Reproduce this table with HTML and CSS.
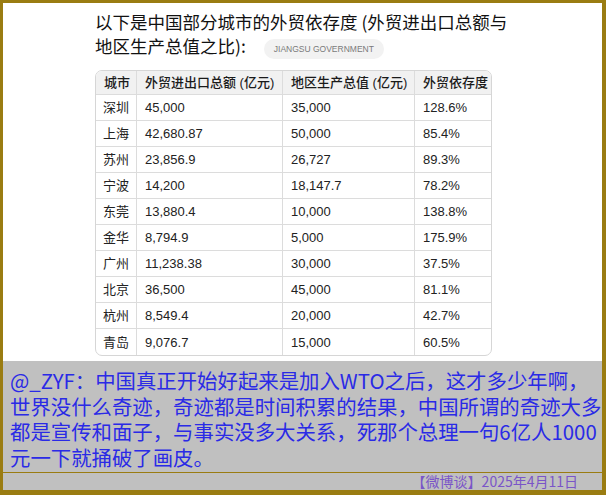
FILE: index.html
```html
<!DOCTYPE html>
<html lang="zh-CN">
<head>
<meta charset="utf-8">
<title>外贸依存度</title>
<link rel="stylesheet" href="styles.css">
</head>
<body>
<div class="frame">
  <div class="shot">
    <h1 class="title">以下是中国部分城市的外贸依存度 (外贸进出口总额与<br>地区生产总值之比):<span class="badge">JIANGSU GOVERNMENT</span></h1>
    <div class="table-wrap">
      <table class="data">
        <thead>
          <tr><th class="c1">城市</th><th class="c2">外贸进出口总额 (亿元)</th><th class="c3">地区生产总值 (亿元)</th><th class="c4">外贸依存度</th></tr>
        </thead>
        <tbody>
          <tr><td>深圳</td><td>45,000</td><td>35,000</td><td>128.6%</td></tr>
          <tr><td>上海</td><td>42,680.87</td><td>50,000</td><td>85.4%</td></tr>
          <tr><td>苏州</td><td>23,856.9</td><td>26,727</td><td>89.3%</td></tr>
          <tr><td>宁波</td><td>14,200</td><td>18,147.7</td><td>78.2%</td></tr>
          <tr><td>东莞</td><td>13,880.4</td><td>10,000</td><td>138.8%</td></tr>
          <tr><td>金华</td><td>8,794.9</td><td>5,000</td><td>175.9%</td></tr>
          <tr><td>广州</td><td>11,238.38</td><td>30,000</td><td>37.5%</td></tr>
          <tr><td>北京</td><td>36,500</td><td>45,000</td><td>81.1%</td></tr>
          <tr><td>杭州</td><td>8,549.4</td><td>20,000</td><td>42.7%</td></tr>
          <tr><td>青岛</td><td>9,076.7</td><td>15,000</td><td>60.5%</td></tr>
        </tbody>
      </table>
    </div>
  </div>
  <div class="caption">
    <p class="comment">@_ZYF：中国真正开始好起来是加入WTO之后，这才多少年啊，<br>世界没什么奇迹，奇迹都是时间积累的结果，中国所谓的奇迹大多<br>都是宣传和面子，与事实没多大关系，死那个总理一句6亿人1000<br>元一下就捅破了画皮。</p>
    <div class="source">【微博谈】2025年4月11日</div>
  </div>
</div>
</body>
</html>
```
FILE: styles.css
```css
html, body {
  margin: 0;
  padding: 0;
  background: #ffffff;
}

.frame {
  width: 606px;
  height: 495px;
  box-sizing: border-box;
  border-style: solid;
  border-color: #9a7c12;
  border-width: 3px 4px 5px 3px;
  display: flex;
  flex-direction: column;
  overflow: hidden;
}

.shot {
  height: 358px;
  flex: none;
  background: #ffffff;
  padding: 7px 0 0 92px;
  box-sizing: border-box;
}

.title {
  margin: 0;
  font-family: "Noto Sans CJK SC", "Liberation Sans", sans-serif;
  font-size: 17.5px;
  font-weight: 400;
  line-height: 24px;
  color: #111;
}

.badge {
  display: inline-block;
  vertical-align: 1px;
  margin-left: 18px;
  height: 20px;
  line-height: 20px;
  padding: 0 10px;
  border-radius: 10px;
  background: #f2f2f2;
  color: #7a7a7a;
  font-family: "Liberation Sans", sans-serif;
  font-size: 8.5px;
}

.table-wrap {
  margin-top: 11px;
  width: 397px;
  border: 1px solid #d6d6d6;
  border-radius: 7px;
  overflow: hidden;
  box-sizing: border-box;
}

.data {
  width: 100%;
  border-collapse: separate;
  border-spacing: 0;
  font-family: "Liberation Sans", "Noto Sans CJK SC", sans-serif;
  font-size: 13px;
  color: #222;
  table-layout: fixed;
}

.c1 { width: 41px; }
.c2 { width: 146px; }
.c3 { width: 132px; }
.c4 { width: auto; }

.data th,
.data td {
  padding: 0 0 0 8px;
  text-align: left;
  border-right: 1px solid #dcdcdc;
  border-bottom: 1px solid #dcdcdc;
  white-space: nowrap;
  box-sizing: border-box;
}

.data th:last-child,
.data td:last-child {
  border-right: none;
}

.data th {
  background: #f1f1f1;
  font-weight: 500;
  height: 24px;
  line-height: 23px;
  color: #1a1a1a;
}

.data td {
  height: 26px;
  line-height: 25px;
}

.data td:first-child {
  padding-left: 7px;
}

.data tbody tr:last-child td {
  border-bottom: none;
}

.caption {
  flex: 1;
  background: #c0c0c0;
  display: flex;
  flex-direction: column;
}

.comment {
  margin: 0;
  padding: 7px 0 0 7px;
  height: 111px;
  box-sizing: border-box;
  font-family: "Noto Sans CJK SC", sans-serif;
  font-size: 20.4px;
  line-height: 25.5px;
  color: #2a2ae6;
  white-space: nowrap;
}

.source {
  flex: 1;
  border-top: 1px solid #9a7c12;
  text-align: right;
  padding-right: 24px;
  font-family: "Noto Sans CJK SC", sans-serif;
  font-size: 14px;
  line-height: 17px;
  color: #7a55c8;
}
```
